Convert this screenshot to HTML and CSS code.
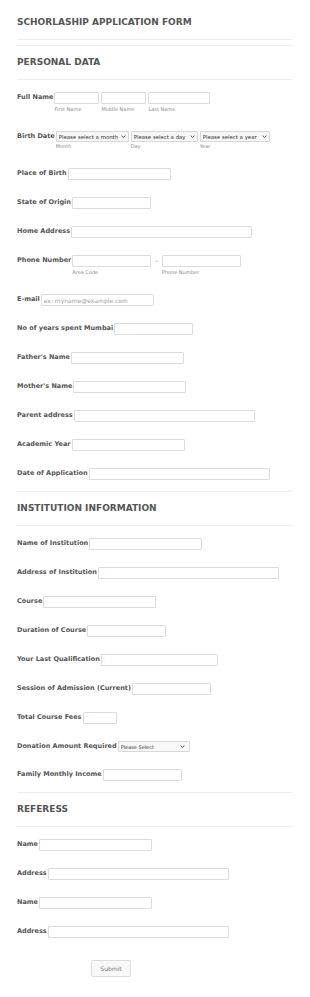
FILE: index.html
```html
<!DOCTYPE html>
<html lang="en">
<head>
    <meta charset="UTF-8">
    <meta name="viewport" content="width=device-width, initial-scale=1.0">
    <title>Schorlaship Application Form</title>
    <link rel="stylesheet" href="styles.css">
</head>
<body>
    <form class="form" onsubmit="return false">
        <h1 class="form-title">SCHORLASHIP APPLICATION FORM</h1>

        <!-- Personal data -->
        <h2 class="section-head">PERSONAL DATA</h2>
        <div class="fields">
            <div class="row">
                <label class="label">Full Name</label>
                <div class="group">
                    <div class="sub"><input class="input w-first" type="text"><span class="sublabel">First Name</span></div>
                    <div class="sub"><input class="input w-first" type="text"><span class="sublabel">Middle Name</span></div>
                    <div class="sub"><input class="input w-last" type="text"><span class="sublabel">Last Name</span></div>
                </div>
            </div>
            <div class="row">
                <label class="label">Birth Date</label>
                <div class="group">
                    <div class="sub">
                        <div class="select-wrap w-month">
                            <select class="select"><option>Please select a month</option></select>
                            <svg class="chev" viewBox="0 0 8 5"><path d="M1 1l3 3 3-3" fill="none" stroke="#333" stroke-width="1.4"/></svg>
                        </div>
                        <span class="sublabel short">Month</span>
                    </div>
                    <div class="sub">
                        <div class="select-wrap w-day">
                            <select class="select"><option>Please select a day</option></select>
                            <svg class="chev" viewBox="0 0 8 5"><path d="M1 1l3 3 3-3" fill="none" stroke="#333" stroke-width="1.4"/></svg>
                        </div>
                        <span class="sublabel short">Day</span>
                    </div>
                    <div class="sub">
                        <div class="select-wrap w-year">
                            <select class="select"><option>Please select a year</option></select>
                            <svg class="chev" viewBox="0 0 8 5"><path d="M1 1l3 3 3-3" fill="none" stroke="#333" stroke-width="1.4"/></svg>
                        </div>
                        <span class="sublabel short">Year</span>
                    </div>
                </div>
            </div>
            <div class="row"><label class="label">Place of Birth</label><input class="input w-mid" type="text"></div>
            <div class="row"><label class="label">State of Origin</label><input class="input w-sm" type="text"></div>
            <div class="row"><label class="label">Home Address</label><input class="input w-lg" type="text"></div>
            <div class="row">
                <label class="label">Phone Number</label>
                <div class="group">
                    <div class="sub"><input class="input w-sm" type="text"><span class="sublabel">Area Code</span></div>
                    <span class="dash">-</span>
                    <div class="sub"><input class="input w-sm" type="text"><span class="sublabel">Phone Number</span></div>
                </div>
            </div>
            <div class="row"><label class="label">E-mail</label><input class="input w-md" type="email" placeholder="ex: myname@example.com"></div>
            <div class="row"><label class="label">No of years spent Mumbai</label><input class="input w-sm" type="text"></div>
            <div class="row"><label class="label">Father's Name</label><input class="input w-md" type="text"></div>
            <div class="row"><label class="label">Mother's Name</label><input class="input w-md" type="text"></div>
            <div class="row"><label class="label">Parent address</label><input class="input w-lg" type="text"></div>
            <div class="row"><label class="label">Academic Year</label><input class="input w-md" type="text"></div>
            <div class="row"><label class="label">Date of Application</label><input class="input w-lg" type="text"></div>
        </div>

        <!-- Institution -->
        <h2 class="section-head">INSTITUTION INFORMATION</h2>
        <div class="fields">
            <div class="row"><label class="label">Name of Institution</label><input class="input w-md" type="text"></div>
            <div class="row"><label class="label">Address of Institution</label><input class="input w-lg" type="text"></div>
            <div class="row"><label class="label">Course</label><input class="input w-md" type="text"></div>
            <div class="row"><label class="label">Duration of Course</label><input class="input w-sm" type="text"></div>
            <div class="row"><label class="label">Your Last Qualification</label><input class="input w-qual" type="text"></div>
            <div class="row"><label class="label">Session of Admission (Current)</label><input class="input w-sm" type="text"></div>
            <div class="row"><label class="label">Total Course Fees</label><input class="input w-xs" type="text"></div>
            <div class="row">
                <label class="label">Donation Amount Required</label>
                <div class="select-wrap w-donation">
                    <select class="select"><option>Please Select</option></select>
                    <svg class="chev" viewBox="0 0 8 5"><path d="M1 1l3 3 3-3" fill="none" stroke="#333" stroke-width="1.4"/></svg>
                </div>
            </div>
            <div class="row"><label class="label">Family Monthly Income</label><input class="input w-sm" type="text"></div>
        </div>

        <!-- Referees -->
        <h2 class="section-head">REFERESS</h2>
        <div class="fields">
            <div class="row"><label class="label">Name</label><input class="input w-md" type="text"></div>
            <div class="row"><label class="label">Address</label><input class="input w-lg" type="text"></div>
            <div class="row"><label class="label">Name</label><input class="input w-md" type="text"></div>
            <div class="row"><label class="label">Address</label><input class="input w-lg" type="text"></div>
        </div>

        <div class="actions">
            <button type="submit" class="submit-btn">Submit</button>
        </div>
    </form>
</body>
</html>
```

FILE: styles.css
```css
* {
    margin: 0;
    padding: 0;
    box-sizing: border-box;
}

body {
    background-color: #fff;
    color: #555;
    font-family: "DejaVu Sans", Verdana, sans-serif;
}

.form {
    padding: 0 18px 0 17px;
}

.form-title {
    font-size: 9px;
    line-height: 11px;
    font-weight: bold;
    color: #555;
    padding: 17px 0 11px;
    border-bottom: 1px solid #ececec;
}

.section-head {
    font-size: 9px;
    line-height: 11px;
    font-weight: bold;
    color: #555;
    margin-top: 5px;
    padding: 11px 0;
    border-top: 1px solid #ececec;
    border-bottom: 1px solid #ececec;
}

.fields + .section-head {
    margin-top: 0;
}

.fields {
    display: flex;
    flex-direction: column;
    gap: 17px;
    padding: 12px 0 11px;
}

.row {
    display: flex;
    align-items: flex-start;
}

.label {
    font-size: 6.5px;
    line-height: 11px;
    font-weight: bold;
    color: #555;
    white-space: nowrap;
    margin-right: 1px;
}

.group {
    display: flex;
    align-items: flex-start;
    gap: 2px;
}

.sub {
    display: flex;
    flex-direction: column;
}

.sublabel {
    font-size: 5px;
    line-height: 10px;
    color: #8a8a8a;
}

.sublabel.short {
    line-height: 9px;
}

.dash {
    font-size: 7px;
    line-height: 12px;
    color: #777;
    padding: 0 2px;
}

.input {
    display: block;
    height: 12px;
    border: 1px solid #dcdcdc;
    border-radius: 1px;
    background-color: #fff;
    font-family: "DejaVu Sans", Verdana, sans-serif;
    font-size: 6px;
    padding: 0 2px;
    outline: none;
}

.input::placeholder {
    color: #a0a0a0;
}

.w-first { width: 45px; }
.w-last { width: 62px; }
.w-xs { width: 34px; }
.w-sm { width: 79px; }
.w-mid { width: 103px; }
.w-md { width: 113px; }
.w-qual { width: 117px; }
.w-lg { width: 181px; }

.select-wrap {
    position: relative;
    height: 11px;
}

.select {
    display: block;
    appearance: none;
    -webkit-appearance: none;
    width: 100%;
    height: 11px;
    border: 1px solid #d8d8d8;
    border-radius: 1px;
    background-color: #f7f7f7;
    color: #333;
    font-family: "DejaVu Sans", Verdana, sans-serif;
    font-size: 5.4px;
    padding: 0 2px;
}

.chev {
    position: absolute;
    right: 3px;
    top: 4px;
    width: 5px;
    height: 3px;
}

.w-month { width: 73px; }
.w-day { width: 67px; }
.w-year { width: 70px; }
.w-donation { width: 72px; }

.w-donation .select {
    font-size: 5px;
}

.w-donation .chev {
    right: 5px;
}

.actions {
    padding: 11px 0 18px 74px;
}

.submit-btn {
    display: block;
    width: 40px;
    height: 17px;
    border: 1px solid #dcdcdc;
    border-radius: 2px;
    background-color: #f8f8f8;
    color: #777;
    font-family: "DejaVu Sans", Verdana, sans-serif;
    font-size: 6px;
    cursor: pointer;
}
```
